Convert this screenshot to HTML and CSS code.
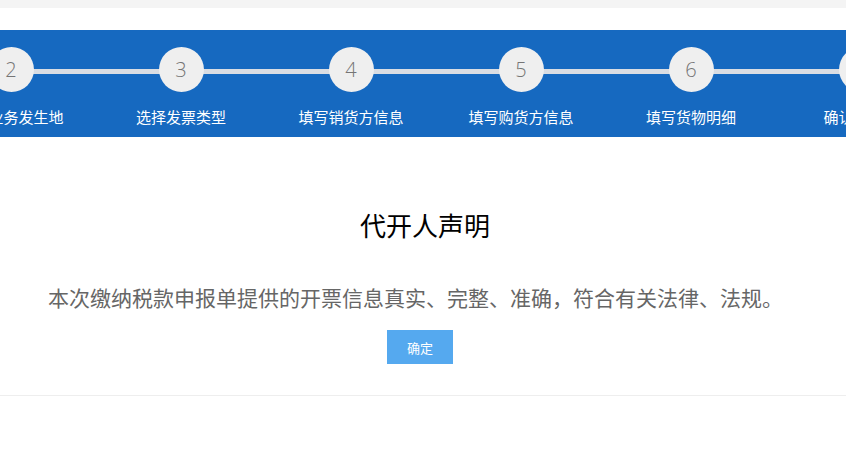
FILE: index.html
```html
<!DOCTYPE html>
<html lang="zh-CN">
<head>
<meta charset="utf-8">
<title>代开人声明</title>
<link rel="stylesheet" href="styles.css">
</head>
<body>
<div class="topbar"></div>
<div class="steps-band">
  <div class="steps">
    <div class="step"><div class="num">1</div><div class="label">选择纳税人</div></div>
    <div class="step"><div class="num">2</div><div class="label">选择业务发生地</div></div>
    <div class="step"><div class="num">3</div><div class="label">选择发票类型</div></div>
    <div class="step"><div class="num">4</div><div class="label">填写销货方信息</div></div>
    <div class="step"><div class="num">5</div><div class="label">填写购货方信息</div></div>
    <div class="step"><div class="num">6</div><div class="label">填写货物明细</div></div>
    <div class="step"><div class="num">7</div><div class="label">确认并提交</div></div>
  </div>
</div>
<main class="statement">
  <h1 class="title">代开人声明</h1>
  <p class="text">本次缴纳税款申报单提供的开票信息真实、完整、准确，符合有关法律、法规。</p>
  <div class="actions"><button class="btn">确定</button></div>
</main>
</body>
</html>
```
FILE: styles.css
```css
html, body {
  margin: 0;
  padding: 0;
  background: #ffffff;
  font-family: "Noto Sans CJK SC", "Noto Sans", sans-serif;
  overflow: hidden;
}
.topbar {
  height: 8px;
  background: #f4f4f4;
  margin-bottom: 22px;
}
.steps-band {
  height: 107px;
  background: #1669c0;
  overflow: hidden;
}
.steps {
  display: flex;
  margin-left: -244px;
  padding-top: 17px;
  background: linear-gradient(#d9dde3, #d9dde3) no-repeat 0 39px / 100% 5px;
  width: max-content;
}
.step {
  width: 170px;
  flex: none;
  display: flex;
  flex-direction: column;
  align-items: center;
}
.num {
  width: 45px;
  height: 45px;
  border-radius: 50%;
  background: #efefef;
  color: #757575;
  font-family: "Open Sans", "DejaVu Sans", sans-serif;
  font-weight: 300;
  font-size: 20px;
  line-height: 45px;
  text-align: center;
}
.label {
  margin-top: 15px;
  color: #ffffff;
  font-size: 15px;
  line-height: 20px;
  white-space: nowrap;
}
.statement {
  padding-top: 70px;
  padding-bottom: 31px;
  border-bottom: 1px solid #eeeeee;
}
.title {
  margin: 0;
  font-size: 26px;
  line-height: 36px;
  font-weight: 400;
  color: #000000;
  text-align: center;
  padding-left: 4px;
}
.text {
  margin: 39px 0 0 48px;
  font-size: 21px;
  line-height: 30px;
  color: #666666;
  white-space: nowrap;
}
.actions {
  margin-top: 18px;
  padding-left: 387px;
}
.btn {
  width: 66px;
  height: 34px;
  border: 0;
  border-radius: 0;
  background: #55a9ef;
  color: #ffffff;
  font-family: "Noto Sans CJK SC", sans-serif;
  font-size: 13px;
  padding: 0;
  display: block;
}
```
